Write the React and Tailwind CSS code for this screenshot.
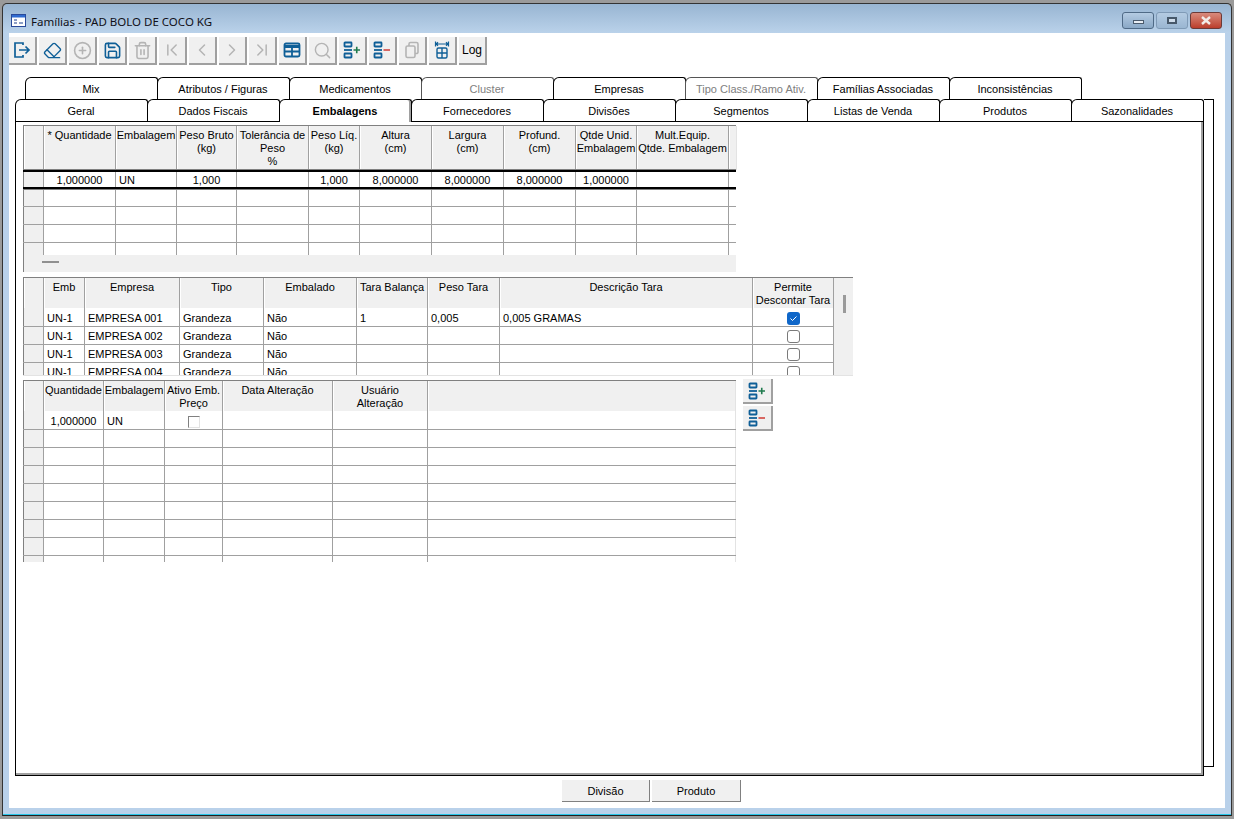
import React from 'react';
import { CirclePlus, Save, Trash2, ChevronFirst, ChevronLeft, ChevronRight, ChevronLast, Search, Eraser } from 'lucide-react';

const BLUE = '#0f5f97';
const GREY = '#b4b4b4';

const ExitIcon = () => (
  <svg width="18" height="18" viewBox="0 0 18 18" fill="none" stroke={BLUE} strokeWidth="1.7">
    <path d="M10 4V2H2v14h8v-2" />
    <path d="M6 9h10M12.5 5.5 16 9l-3.5 3.5" />
  </svg>
);

const TableIcon = () => (
  <svg width="18" height="18" viewBox="0 0 18 18" fill="none" stroke={BLUE}>
    <rect x="1.5" y="2.5" width="15" height="13" rx="1.5" strokeWidth="1.8" />
    <path d="M1.5 5.5h15" strokeWidth="3" />
    <path d="M1.5 10.5h15M9 6v9" strokeWidth="1.8" />
  </svg>
);

const ListPlus = () => (
  <svg width="18" height="18" viewBox="0 0 18 18" fill="none">
    <rect x="1.5" y="1.5" width="7" height="4" rx="0.5" stroke={BLUE} strokeWidth="1.8" />
    <path d="M1 9h8" stroke={BLUE} strokeWidth="1.8" />
    <rect x="1.5" y="12.5" width="7" height="4" rx="0.5" stroke={BLUE} strokeWidth="1.8" />
    <path d="M10.5 9h6.5M13.75 5.75v6.5" stroke="#1f7a4d" strokeWidth="1.6" />
  </svg>
);

const ListMinus = () => (
  <svg width="18" height="18" viewBox="0 0 18 18" fill="none">
    <rect x="1.5" y="1.5" width="7" height="4" rx="0.5" stroke={BLUE} strokeWidth="1.8" />
    <path d="M1 9h8" stroke={BLUE} strokeWidth="1.8" />
    <rect x="1.5" y="12.5" width="7" height="4" rx="0.5" stroke={BLUE} strokeWidth="1.8" />
    <path d="M10.5 9h6.5" stroke="#d2453f" strokeWidth="1.6" />
  </svg>
);

const CopyIcon = () => (
  <svg width="18" height="18" viewBox="0 0 18 18" fill="none" stroke={GREY} strokeWidth="1.6">
    <rect x="3" y="5" width="9" height="11.5" rx="1.5" />
    <path d="M6 5V3a1.5 1.5 0 0 1 1.5-1.5h6A1.5 1.5 0 0 1 15 3v8a1.5 1.5 0 0 1-1.5 1.5H12" />
  </svg>
);

const GridArrows = () => (
  <svg width="18" height="18" viewBox="0 0 18 18" fill="none" stroke={BLUE} strokeWidth="1.4">
    <path d="M2.5 0.5v5M15.5 0.5v5M3 3h12M5 1.2 3 3l2 1.8M13 1.2 15 3l-2 1.8" strokeWidth="1.2" />
    <rect x="4" y="7" width="10" height="10" rx="1.5" />
    <path d="M4 12h10M9 7v10" />
  </svg>
);

const ToolBtn = ({ children }) => (
  <button className="w-[28px] h-[28px] flex items-center justify-center bg-[#f0f0f0] border-r-2 border-b-2 border-[#a0a0a0] text-[12px] text-black">
    {children}
  </button>
);

const toolbar = [
  <ExitIcon />,
  <Eraser size={19} color={BLUE} strokeWidth={1.7} />,
  <CirclePlus size={19} color={GREY} strokeWidth={2} />,
  <Save size={19} color={BLUE} strokeWidth={2} />,
  <Trash2 size={19} color={GREY} strokeWidth={2} />,
  <ChevronFirst size={20} color={GREY} strokeWidth={1.8} />,
  <ChevronLeft size={20} color={GREY} strokeWidth={1.8} />,
  <ChevronRight size={20} color={GREY} strokeWidth={1.8} />,
  <ChevronLast size={20} color={GREY} strokeWidth={1.8} />,
  <TableIcon />,
  <Search size={19} color={GREY} strokeWidth={1.8} />,
  <ListPlus />,
  <ListMinus />,
  <CopyIcon />,
  <GridArrows />,
  'Log',
];

const Tab = ({ label, active, disabled }) => (
  <div
    className={`w-[133px] -ml-px first:ml-0 flex items-center justify-center border-l border-t border-r rounded-tl-[6px] rounded-tr-[3px] bg-white text-[11px] pt-px pr-px ${
      active
        ? 'h-[23px] -mb-px relative z-10 font-bold border-black text-black shadow-[inset_-2px_0_0_#a0a0a0]'
        : disabled
          ? 'h-[22px] border-[#555555] text-[#808080]'
          : 'h-[22px] border-black text-black'
    }`}
  >
    {label}
  </div>
);

const topTabs = [
  ['Mix'], ['Atributos / Figuras'], ['Medicamentos'], ['Cluster', true], ['Empresas'],
  ['Tipo Class./Ramo Ativ.', true], ['Famílias Associadas'], ['Inconsistências'],
];
const bottomTabs = ['Geral', 'Dados Fiscais', 'Embalagens', 'Fornecedores', 'Divisões', 'Segmentos', 'Listas de Venda', 'Produtos', 'Sazonalidades'];

// column widths include the right grid line
const cols1 = ['w-[21px]', 'w-[72px]', 'w-[61px]', 'w-[60px]', 'w-[72px]', 'w-[51px]', 'w-[72px]', 'w-[72px]', 'w-[72px]', 'w-[61px]', 'w-[92px]', 'w-[8px]'];
const cols2 = ['w-[21px]', 'w-[41px]', 'w-[95px]', 'w-[84px]', 'w-[93px]', 'w-[71px]', 'w-[72px]', 'w-[253px]', 'w-[81px]'];
const cols3 = ['w-[21px]', 'w-[60px]', 'w-[61px]', 'w-[58px]', 'w-[110px]', 'w-[95px]', 'w-[308px]'];

const HeaderRow = ({ cols, labels, height, closed }) => (
  <div className={`flex ${height}`}>
    {cols.map((w, i) => (
      <div
        key={i}
        className={`${w} shrink-0 bg-[#f0f0f0] border-r border-[#a0a0a0] shadow-[inset_1px_0_0_#ffffff] pt-[3px] text-center whitespace-pre-line overflow-hidden ${
          i === 0 ? 'border-l border-l-[#808080]' : ''
        } ${!closed && i === cols.length - 1 ? 'border-r-[#e3e3e3]' : ''}`}
      >
        {labels[i]}
      </div>
    ))}
  </div>
);

const Row = ({ cols, cells = [], height, last, selected, closed, full, pad = 'pt-px' }) => (
  <div
    className={`flex overflow-hidden ${height} ${
      selected ? 'border-y-2 border-black relative shadow-[0_-1px_0_#808080,0_1px_0_#808080]' : last ? '' : 'border-b border-[#a0a0a0]'
    }`}
  >
    {cols.map((w, i) => {
      const cell = cells[i];
      const value = cell && cell.c !== undefined ? cell.c : cell;
      const center = cell && cell.c !== undefined;
      return (
        <div
          key={i}
          className={`${w} ${full || 'h-full'} ${pad} shrink-0 border-r border-[#a0a0a0] overflow-hidden whitespace-nowrap flex items-center ${
            i === 0 ? 'bg-[#f0f0f0] border-l border-l-[#808080]' : 'bg-white'
          } ${center ? 'justify-center' : 'pl-[3px]'} ${!closed && i === cols.length - 1 ? 'border-r-[#e3e3e3]' : ''}`}
        >
          {value}
        </div>
      );
    })}
  </div>
);

const RoundCheck = ({ checked }) =>
  checked ? (
    <span className="w-[13px] h-[13px] rounded-[3px] bg-[#0f67c9] flex items-center justify-center">
      <svg width="9" height="9" viewBox="0 0 9 9" fill="none" stroke="#ffffff" strokeWidth="1">
        <path d="M1.5 4.5 3.5 6.5 7.5 2.5" />
      </svg>
    </span>
  ) : (
    <span className="w-[13px] h-[13px] shrink-0 rounded-[3px] border border-[#7a7a7a] bg-white" />
  );

const SquareCheck = () => (
  <span className="w-[12px] h-[12px] border-t border-l border-[#808080] border-r border-b border-r-[#e3e3e3] border-b-[#e3e3e3] bg-white" />
);

const Table1 = () => (
  <div className="w-[713px] border-t border-[#808080] bg-[#f0f0f0]">
    <HeaderRow
      cols={cols1}
      height="h-[44px]"
      labels={['', '* Quantidade', 'Embalagem', 'Peso Bruto\n(kg)', 'Tolerância de\nPeso\n%', 'Peso Líq.\n(kg)', 'Altura\n(cm)', 'Largura\n(cm)', 'Profund.\n(cm)', 'Qtde Unid.\nEmbalagem', 'Mult.Equip.\nQtde. Embalagem', '']}
    />
    <Row
      cols={cols1}
      height="h-[19px]"
      selected
      cells={['', { c: '1,000000' }, 'UN', { c: '1,000' }, '', { c: '1,000' }, { c: '8,000000' }, { c: '8,000000' }, { c: '8,000000' }, { c: '1,000000' }]}
    />
    <Row cols={cols1} height="h-[18px]" />
    <Row cols={cols1} height="h-[18px]" />
    <Row cols={cols1} height="h-[18px]" />
    <Row cols={cols1} height="h-[12px]" last />
    <div className="h-[17px] pl-[18px] pt-[6px] border-l border-[#808080]">
      <div className="w-[17px] h-[2px] bg-[#909090]" />
    </div>
  </div>
);

const empresas = [
  ['EMPRESA 001', '1', '0,005', '0,005 GRAMAS', true],
  ['EMPRESA 002'],
  ['EMPRESA 003'],
  ['EMPRESA 004'],
];

const Table2 = () => (
  <div className="mt-[5px] w-[830px] flex border-t border-[#808080] border-b border-b-[#e3e3e3] bg-[#f0f0f0]">
    <div className="w-[811px] shrink-0">
      <HeaderRow
        cols={cols2}
        height="h-[30px]"
        closed
        labels={['', 'Emb', 'Empresa', 'Tipo', 'Embalado', 'Tara Balança', 'Peso Tara', 'Descrição Tara', 'Permite\nDescontar Tara']}
      />
      {empresas.map((e, i) => (
        <Row
          key={e[0]}
          cols={cols2}
          closed
          height={i === 0 ? 'h-[19px]' : i === 3 ? 'h-[12px]' : 'h-[18px]'}
          full={i === 3 ? 'h-[18px]' : ''}
          pad={i === 0 ? 'pt-[3px]' : 'pt-px'}
          last={i === 3}
          cells={['', 'UN-1', e[0], 'Grandeza', 'Não', e[1], e[2], e[3], { c: <RoundCheck checked={e[4]} /> }]}
        />
      ))}
    </div>
    <div className="flex-1 pl-[9px] pt-[17px]">
      <div className="w-[3px] h-[18px] bg-[#9a9a9a]" />
    </div>
  </div>
);

const Table3 = () => (
  <div className="w-[713px] border-t border-[#808080] bg-white">
    <HeaderRow
      cols={cols3}
      height="h-[30px]"
      labels={['', 'Quantidade', 'Embalagem', 'Ativo Emb.\nPreço', 'Data Alteração', 'Usuário\nAlteração', '']}
    />
    <Row cols={cols3} height="h-[19px]" pad="pt-[3px]" cells={['', { c: '1,000000' }, 'UN', { c: <SquareCheck /> }]} />
    {[1, 2, 3, 4, 5, 6, 7].map((n) => (
      <Row key={n} cols={cols3} height="h-[18px]" />
    ))}
    <Row cols={cols3} height="h-[6px]" last />
  </div>
);

const SideBtn = ({ children }) => (
  <button className="w-[30px] h-[25px] flex items-center justify-center bg-[#f0f0f0] border-r-2 border-b-2 border-[#a0a0a0]">
    {children}
  </button>
);

const WinBtn = ({ className, children }) => (
  <div className={`w-[32px] h-[17px] rounded-[3px] border flex items-center justify-center ${className}`}>{children}</div>
);

const FooterBtn = ({ label, className }) => (
  <button className={`h-[22px] pt-[2px] bg-[#f0f0f0] border-r border-b border-[#808080] text-center ${className}`}>{label}</button>
);

export default function App() {
  return (
    <div
      className="w-[1234px] h-[819px] bg-[#9a9a9a] pt-[3px] px-[2px] pb-[3px] overflow-hidden text-black text-[11px] leading-[13px]"
      style={{ fontFamily: '"Liberation Sans", Arial, sans-serif' }}
    >
      <div className="h-full flex flex-col rounded-t-[5px] border border-[#333333] border-b-[#1f1f1f]">
        {/* title bar */}
        <div className="h-[29px] shrink-0 flex items-start rounded-t-[5px] bg-gradient-to-b from-[#98b5d2] to-[#bad2ea] pt-[8px] pl-[8px] pr-[9px]">
          <svg width="15" height="13" viewBox="0 0 15 13" className="shrink-0 mt-[2px]">
            <rect x="0.5" y="0.5" width="14" height="12" fill="#ffffff" stroke="#2a4a9a" />
            <rect x="1" y="1" width="13" height="2.5" fill="#2f6bd0" />
            <path d="M3 6h3M8 9h4M3 9h3" stroke="#1c3f8c" strokeWidth="1" />
          </svg>
          <span className="ml-[5px] mt-[3px] text-[11.5px] text-[#101018]" style={{ fontFamily: '"Noto Sans", sans-serif' }}>
            Famílias - PAD BOLO DE COCO KG
          </span>
          <div className="ml-auto flex gap-[2px]">
            <WinBtn className="border-[#4f6a86] bg-gradient-to-b from-[#b4cbe2] to-[#8aa8c6]">
              <span className="w-[11px] h-[4px] mt-[3px] bg-[#e8edf3] border border-[#4a5a6c]" />
            </WinBtn>
            <WinBtn className="border-[#7f9ab6] bg-gradient-to-b from-[#b4cbe2] to-[#9ab6d2]">
              <span className="w-[10px] h-[7px] border-2 border-[#47586a] bg-[#cfdcea]" />
            </WinBtn>
            <WinBtn className="border-[#6b3a38] bg-gradient-to-b from-[#d88a7c] to-[#bb3d2c]">
              <svg width="12" height="9" viewBox="0 0 12 9" stroke="#f2ece8" strokeWidth="2.4">
                <path d="M2 1l8 7M10 1 2 8" />
              </svg>
            </WinBtn>
          </div>
        </div>

        {/* frame */}
        <div className="flex-1 min-h-0 flex flex-col bg-[#b9d1ea] px-[6px] pb-[6px] border-b border-[#27c5e8]">
          <div className="flex-1 min-h-0 bg-white pt-[4px]">
            <div className="flex gap-[2px]">
              {toolbar.map((item, i) => (
                <ToolBtn key={i}>{item}</ToolBtn>
              ))}
            </div>

            <div className="mt-[12px] ml-[16px] flex">
              {topTabs.map(([label, disabled]) => (
                <Tab key={label} label={label} disabled={disabled} />
              ))}
            </div>

            <div className="ml-[6px] flex items-start">
              <div className="w-[1189px] shrink-0">
                <div className="flex">
                  {bottomTabs.map((label) => (
                    <Tab key={label} label={label} active={label === 'Embalagens'} />
                  ))}
                </div>
                <div className="h-[655px] border border-black bg-white pl-[7px] pt-[3px] shadow-[inset_-2px_-2px_0_#a0a0a0]">
                  <Table1 />
                  <Table2 />
                  <div className="mt-[4px] flex gap-[7px] items-start">
                    <Table3 />
                    <div className="-mt-px flex flex-col gap-[2px]">
                      <SideBtn><ListPlus /></SideBtn>
                      <SideBtn><ListMinus /></SideBtn>
                    </div>
                  </div>
                </div>
              </div>
              <div className="w-[10px] h-[668px] border-t border-r border-b border-black" />
            </div>

            <div className="mt-[4px] ml-[553px] flex gap-[2px]">
              <FooterBtn label="Divisão" className="w-[88px]" />
              <FooterBtn label="Produto" className="w-[89px]" />
            </div>
          </div>
        </div>
      </div>
    </div>
  );
}
